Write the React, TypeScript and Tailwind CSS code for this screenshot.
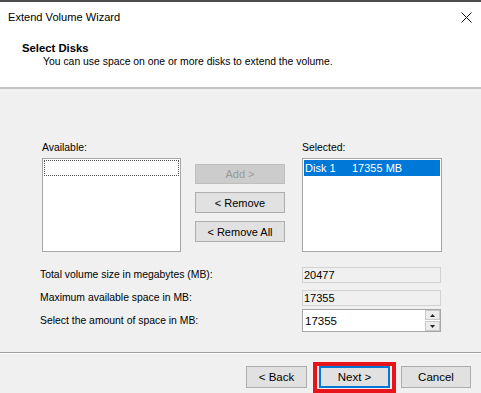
export default function App() {
  return (
    <div
      className="w-[481px] h-[393px] overflow-hidden bg-[#f0f0f0] text-black text-[10.4px] leading-[14px]"
      style={{ fontFamily: "'Liberation Sans', Arial, sans-serif" }}
    >
      <div className="h-[2px] bg-[#4d4d4d]" />

      {/* header */}
      <div className="h-[85px] bg-white">
        <div className="h-[30px] flex items-center justify-between pl-[8px] pr-[8px]">
          <span className="text-[11.1px]">Extend Volume Wizard</span>
          <svg width="11" height="11" viewBox="0 0 11 11" className="mr-[1px]">
            <path d="M0.5 0.5 L10.5 10.5 M10.5 0.5 L0.5 10.5" stroke="#111" strokeWidth="1" />
          </svg>
        </div>
        <p className="mt-[9px] pl-[22px] font-bold text-[11.3px]">Select Disks</p>
        <p className="pl-[43px]">You can use space on one or more disks to extend the volume.</p>
      </div>
      <div className="h-[2px] bg-[#c4c4c4]" />

      {/* disk lists */}
      <div className="pt-[52px] pl-[42px] flex">
        <div className="w-[139px]">
          <p>Available:</p>
          <div className="mt-[3px] h-[94px] bg-white border border-[#a6a6a6] p-[1px]">
            <div className="h-[16px] border border-dotted border-[#555]" />
          </div>
        </div>
        <div className="ml-[14px] w-[90px] pt-[23px] flex flex-col gap-[8px] text-[11px]">
          <button className="h-[20px] bg-[#cccccc] border border-[#bfbfbf] text-[#9a9a9a]">Add &gt;</button>
          <button className="h-[21px] bg-[#e1e1e1] border border-[#adadad]">&lt; Remove</button>
          <button className="h-[21px] bg-[#e1e1e1] border border-[#adadad]">&lt; Remove All</button>
        </div>
        <div className="ml-[17px] w-[140px]">
          <p>Selected:</p>
          <div className="mt-[3px] h-[94px] bg-white border border-[#a6a6a6] p-[1px]">
            <div className="h-[16px] bg-[#0078d7] text-white flex items-center pl-[1px] text-[11px]">
              <span className="w-[47px]">Disk 1</span>
              <span>17355 MB</span>
            </div>
          </div>
        </div>
      </div>

      {/* sizes */}
      <div className="pl-[40px] mt-[15px]">
        <div className="flex items-center h-[16px]">
          <span className="w-[262px]">Total volume size in megabytes (MB):</span>
          <div className="w-[139px] h-[16px] border border-[#d2d2d2] bg-[#f0f0f0] pl-[1px] flex items-center text-[11px]">20477</div>
        </div>
        <div className="flex items-center h-[16px] mt-[7px]">
          <span className="w-[262px]">Maximum available space in MB:</span>
          <div className="w-[139px] h-[16px] border border-[#d2d2d2] bg-[#f0f0f0] pl-[1px] flex items-center text-[11px]">17355</div>
        </div>
        <div className="flex items-center h-[23px] mt-[3px]">
          <span className="w-[262px]">Select the amount of space in MB:</span>
          <div className="w-[139px] h-[23px] border border-[#a6a6a6] bg-white flex items-center">
            <span className="flex-1 pl-[2px] text-[11.5px]">17355</span>
            <div className="w-[15px] h-[21px] flex flex-col gap-[1px]">
              <div className="flex-1 bg-[#ececec] border border-[#c8c8c8] flex items-center justify-center">
                <svg width="5" height="3" viewBox="0 0 5 3"><path d="M2.5 0 L5 3 L0 3 Z" fill="#222" /></svg>
              </div>
              <div className="flex-1 bg-[#ececec] border border-[#c8c8c8] flex items-center justify-center">
                <svg width="5" height="3" viewBox="0 0 5 3"><path d="M0 0 L5 0 L2.5 3 Z" fill="#222" /></svg>
              </div>
            </div>
          </div>
        </div>
      </div>

      {/* footer */}
      <div className="mt-[20px] h-[1px] bg-[#a0a0a0]" />
      <div className="h-[1px] bg-white" />
      <div className="mt-[8px] flex justify-end pr-[10px] text-[11.5px]">
        <button className="mt-[4px] w-[61px] h-[22px] bg-[#e1e1e1] border border-[#adadad]">&lt; Back</button>
        <div className="ml-[6px] border-[4px] border-[#e8141c] px-[2px] pb-[1px] h-[31px]">
          <button className="w-[71px] h-[22px] bg-[#e1e1e1] border-2 border-[#0078d7]">Next &gt;</button>
        </div>
        <button className="ml-[5px] mt-[4px] w-[70px] h-[22px] bg-[#e1e1e1] border border-[#adadad]">Cancel</button>
      </div>
    </div>
  );
}
